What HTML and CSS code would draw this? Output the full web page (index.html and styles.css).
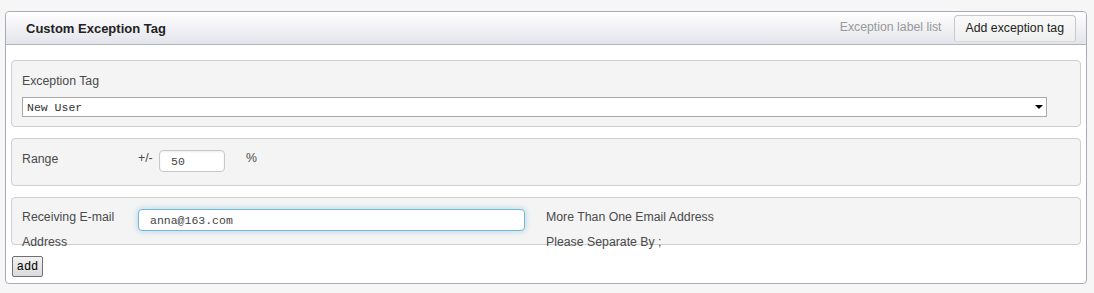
FILE: index.html
```html
<!DOCTYPE html>
<html lang="en">
  <head>
    <title>Custom Exception Tag</title>
    <link rel="stylesheet" href="styles.css">
  </head>
  <body>
    <div class="panel">
      <div class="panel-head">
        <h2 class="panel-title">Custom Exception Tag</h2>
        <ul class="tabs">
          <li class="tab">Exception label list</li>
          <li class="tab tab-active">Add exception tag</li>
        </ul>
      </div>
      <div class="panel-body">
        <div class="field field-tag">
          <label class="field-label" for="tag-select">Exception Tag</label>
          <div class="select-wrap">
            <select id="tag-select" class="select">
              <option selected>New User</option>
            </select>
            <span class="select-arrow"></span>
          </div>
        </div>
        <div class="field field-row">
          <label class="row-label" for="range-input">Range</label>
          <span class="unit">+/-</span>
          <input id="range-input" class="input input-range" type="text" value="50">
          <span class="unit unit-pct">%</span>
        </div>
        <div class="field field-row field-mail">
          <label class="row-label" for="mail-input">Receiving E-mail Address</label>
          <input id="mail-input" class="input input-mail" type="text" value="anna@163.com">
          <p class="hint">More Than One Email Address Please Separate By ;</p>
        </div>
        <button class="btn" type="button">add</button>
      </div>
    </div>
  </body>
</html>
```

FILE: styles.css
```css
html {
  font-family: "Liberation Sans", Arial, sans-serif;
  font-size: 12px;
}

body {
  margin: 0;
  padding: 11px 7px 9px 5px;
  background-color: #f6f6f6;
}

.panel {
  border: 1px solid #a9acb8;
  border-radius: 4px;
  background-color: #fff;
}

.panel-head {
  display: flex;
  align-items: center;
  justify-content: space-between;
  height: 32px;
  padding: 0 10px 0 20px;
  border-bottom: 1px solid #b0b3c0;
  border-radius: 4px 4px 0 0;
  background: linear-gradient(#ffffff, #e3e4eb);
}

.panel-title {
  margin: 0;
  font-size: 13px;
  font-weight: bold;
  color: #222;
}

.tabs {
  display: flex;
  align-items: flex-end;
  align-self: flex-end;
  list-style: none;
  margin: 0;
  padding: 0;
  height: 29px;
  font-size: 12.3px;
}

.tab {
  padding: 0 11px;
  line-height: 25px;
  color: #999;
  border: 1px solid transparent;
  border-bottom: 0;
  margin-bottom: 4px;
}

.tab-active {
  color: #222;
  background: linear-gradient(#fafafa, #eeeeee);
  border-color: #c6c7cf;
  border-radius: 4px 4px 2px 2px;
  box-shadow: 0 1px 0 #d8d9df;
  margin-bottom: 3px;
}

.panel-body {
  padding: 15px 5px 6px 5px;
}

.field {
  border: 1px solid #cfcfcf;
  border-radius: 4px;
  background-color: #f4f4f4;
  color: #4a4a4a;
  font-size: 12.3px;
  margin-bottom: 11px;
}

.field-tag {
  padding: 12px 33px 9px 10px;
}

.field-label {
  display: block;
  line-height: 16px;
  margin-bottom: 8px;
}

.select-wrap {
  position: relative;
}

.select {
  display: block;
  width: 100%;
  height: 20px;
  margin: 0;
  padding: 0 4px;
  border: 1px solid #a9a9a9;
  border-radius: 0;
  background-color: #fff;
  font-family: "Liberation Mono", monospace;
  font-size: 11.5px;
  color: #333;
  appearance: none;
  -webkit-appearance: none;
}

.select-arrow {
  position: absolute;
  right: 4px;
  top: 8px;
  width: 0;
  height: 0;
  border-left: 4px solid transparent;
  border-right: 4px solid transparent;
  border-top: 4px solid #000;
}

.field-row {
  display: flex;
  align-items: flex-start;
  padding: 11px 10px 13px 10px;
}

.row-label {
  width: 116px;
  flex-shrink: 0;
  line-height: 16px;
  padding-top: 1px;
}

.unit {
  line-height: 16px;
  padding-top: 0;
  width: 21px;
}

.unit-pct {
  margin-left: 21px;
}

.input {
  box-sizing: border-box;
  height: 22px;
  margin: 0;
  padding: 0 11px;
  border: 1px solid #c8c8c8;
  border-radius: 4px;
  background-color: #fff;
  font-family: "Liberation Mono", monospace;
  font-size: 11.5px;
  color: #444;
  box-shadow: inset 0 1px 2px rgba(0, 0, 0, 0.08);
}

.input-range {
  width: 66px;
}

.field-mail {
  height: 48px;
  box-sizing: border-box;
  padding: 7px 10px 0 10px;
}

.field-mail .row-label {
  width: 110px;
  margin-right: 6px;
  padding-top: 0;
  line-height: 25px;
}

.input-mail {
  width: 387px;
  margin-top: 4px;
  margin-right: 21px;
  border-color: #73b9d6;
  box-shadow: 0 0 6px rgba(82, 168, 220, 0.45);
}

.hint {
  margin: 0;
  width: 200px;
  line-height: 25px;
}

.btn {
  display: block;
  width: 31px;
  height: 21px;
  margin: 1px 0 0 1px;
  padding: 0;
  border: 1px solid #707070;
  border-radius: 2px;
  background: linear-gradient(#f2f2f2, #dadada);
  font-family: "Liberation Mono", monospace;
  font-size: 12px;
  color: #000;
}
```
